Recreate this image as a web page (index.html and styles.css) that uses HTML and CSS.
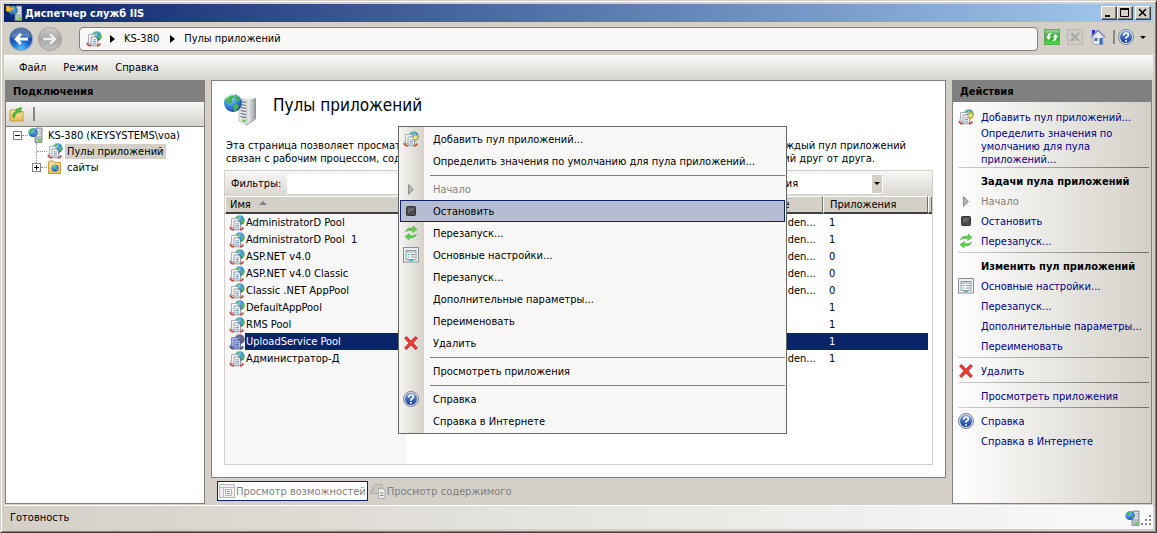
FILE: index.html
```html
<!DOCTYPE html>
<html lang="ru">
<head>
<meta charset="utf-8">
<title>Диспетчер служб IIS</title>
<link rel="stylesheet" href="styles.css">
</head>
<body>
<svg class="defs" aria-hidden="true">
  <defs>
    <radialGradient id="globe-fill" cx=".35" cy=".25" r=".85"><stop offset="0" stop-color="#b5e8ff"/><stop offset=".45" stop-color="#3f8fe6"/><stop offset="1" stop-color="#153a9c"/></radialGradient>
    <linearGradient id="tower-fill"><stop offset="0" stop-color="#f2f4f5"/><stop offset=".5" stop-color="#c4c8cb"/><stop offset="1" stop-color="#8d9296"/></linearGradient>
    <radialGradient id="back-fill" cx=".5" cy=".95" r=".9"><stop offset="0" stop-color="#5cc4ff"/><stop offset=".45" stop-color="#1d66cf"/><stop offset="1" stop-color="#12357f"/></radialGradient>
    <linearGradient id="fwd-fill" x2="0" y2="1"><stop offset="0" stop-color="#cfcdc9"/><stop offset=".5" stop-color="#a9a8a6"/><stop offset="1" stop-color="#c4c2bf"/></linearGradient>
    <linearGradient id="green-fill" x2="0" y2="1"><stop offset="0" stop-color="#a5d9a0"/><stop offset=".5" stop-color="#2da32a"/><stop offset="1" stop-color="#4be83a"/></linearGradient>
    <linearGradient id="help-fill" x2="0" y2="1"><stop offset="0" stop-color="#6f98e0"/><stop offset="1" stop-color="#153a9c"/></linearGradient>
    <linearGradient id="folder-fill" x2="0" y2="1"><stop offset="0" stop-color="#f9e6a4"/><stop offset="1" stop-color="#e6bd55"/></linearGradient>
  </defs>
  <symbol id="pool" viewBox="0 0 16 16">
    <circle cx="10.500" cy="5.300" r="5" fill="url(#globe-fill)"/>
    <path d="M7 2.200Q9 .5 11 1L10 3 8 3.500ZM12.500 4l2.500-1 .3 3.500-2 2.500-1.300-2z" fill="#4cc04c"/>
    <path d="M1.500 10.500Q0 13 3 14.500Q8 16.300 13 14.500L14.500 12.500 11 12Z" fill="#e4e7e9" stroke="#a3a9ad" stroke-width=".5"/>
    <path d="M.8 12.300l1.700 2 2.500.8M11 15l2-.7 1.300-1.500" fill="none" stroke="#d2402f" stroke-width="1.600"/>
    <path d="M2.500 3.500h6.500v9H2.500z" fill="#f7f8f9" stroke="#9aa0a5" stroke-width=".8"/>
    <path d="M5 6h4.500L11.500 8v6H5z" fill="#fff" stroke="#7f878e" stroke-width=".8"/>
    <path d="M6.500 8.800h3.500M6.500 10.500h3.500M6.500 12.200h3.500" stroke="#4a84c4" stroke-width=".8"/>
  </symbol>
  <symbol id="pool-add" viewBox="0 0 16 16">
    <use href="#pool" width="16" height="16"/>
    <path d="M12.500 2.500v8M8.500 6.500h8M9.800 3.800l5.400 5.400M15.200 3.800L9.800 9.200" stroke="#f5a623" stroke-width="1.200"/>
    <circle cx="12.500" cy="6.500" r="1.900" fill="#ffe06a"/>
  </symbol>
  <symbol id="server" viewBox="0 0 32 32">
    <path d="M15 6l8-2.500L32 5v20.500L23 32l-8-4z" fill="#dfe2e4"/>
    <path d="M15 6l8-2.500L32 5l-9 2.500z" fill="#f2f3f4"/>
    <path d="M23 7.500L32 5v20.500L23 32z" fill="url(#tower-fill)"/>
    <path d="M15 6l8 1.500V32l-8-4z" fill="#e6e9eb" stroke="#8c9297" stroke-width=".5"/>
    <path d="M16.500 8.500l5.500 1M16.500 11.500l5.500 1M16.500 14.500l5.500 1M16.500 17.500l5.500 1M16.500 20.500l5.500 1M16.500 23.500l5.500 1.200" stroke="#5b636a" stroke-width="1.200"/>
    <path d="M18.500 27l3 1.300" stroke="#4cc62f" stroke-width="2"/>
    <path d="M32 5v20.500L23 32" fill="none" stroke="#7c8287" stroke-width=".6"/>
    <circle cx="9" cy="10" r="9" fill="url(#globe-fill)"/>
    <path d="M1.500 6Q4 1.500 9 1.500L10.500 4 8 6 8.500 9 5 11 3 9.500ZM12 2.500l4 3.500-1 2.500-3-1ZM9 12l4-1 2 2-3 4.500-2 .5z" fill="#45b548"/>
    <path d="M2.500 5.500Q6 .5 11 2" stroke="#d7f4ff" stroke-width="1.200" fill="none"/>
  </symbol>
  <symbol id="server-small" viewBox="0 0 16 16">
    <path d="M8 1h6v14.500H7V8z" fill="#b4bcc2" stroke="#7a848c" stroke-width=".8"/>
    <path d="M9 3h4M9 5.500h4M9 8h4" stroke="#fff"/>
    <path d="M10 13.500h3.500" stroke="#5fd030" stroke-width="1.600"/>
    <circle cx="5" cy="5.500" r="4.600" fill="url(#globe-fill)"/>
    <path d="M1.500 3Q4 .5 6 1.500L5 4 3 5.500 2.500 8ZM7 6l2-1-1 3-2 1z" fill="#49bb4d"/>
  </symbol>
  <symbol id="app" viewBox="0 0 16 16">
    <use href="#server-small" x="2" y="0" width="16" height="16"/>
    <path d="M0 6V1h4v2l3-1 1 3-3-.5L4 7z" fill="#f5b92d" stroke="#b87812" stroke-width=".6"/>
  </symbol>
  <symbol id="sites" viewBox="0 0 16 16">
    <path d="M1.500 3.500q0-1.500 1.500-1.500h3l1.500 1.500h6v11h-12z" fill="url(#folder-fill)" stroke="#c99b3b"/>
    <circle cx="8" cy="9" r="3.600" fill="url(#globe-fill)"/>
    <path d="M5.500 7.500L8 6l.5 2L7 10zM9 10l2-1-1 3z" fill="#51c24c"/>
  </symbol>
  <symbol id="open" viewBox="0 0 16 16">
    <path d="M1 4h4l1.500 1.500H14V15H1z" fill="url(#folder-fill)" stroke="#c39a40"/>
    <path d="M3.500 11Q3.500 6.500 7.500 5.200L6.500 3.500 12.500 1.500l-1.500 5.500-1.300-1.200Q6.500 7 5 11.500z" fill="#52c43c" stroke="#2c8d27" stroke-width=".7"/>
  </symbol>
  <symbol id="play" viewBox="0 0 16 16"><path d="M5.500 3.500v10l5-5z" fill="#b4b4b4" stroke="#929292"/></symbol>
  <symbol id="stop" viewBox="0 0 16 16"><rect x="3.500" y="3.500" width="9" height="9" rx="1" fill="#4a4a4a" stroke="#333"/><path d="M5 5h6v2L5 10z" fill="#666"/></symbol>
  <symbol id="recycle" viewBox="0 0 16 16">
    <g fill="#64d04c" stroke="#2f9c35" stroke-width=".5"><path d="M2.500 6.800Q4 2.200 10 3.200L10.300 1 14 4.500 9.500 7.500l.2-2Q5 4.600 2.500 6.800Z"/><path d="M13.500 9.200Q12 13.800 6 12.800L5.700 15 2 11.500 6.500 8.500l-.2 2Q11 11.400 13.500 9.200Z"/></g>
  </symbol>
  <symbol id="settings" viewBox="0 0 16 16">
    <rect x=".5" y=".5" width="15" height="14.500" fill="#eceeef" stroke="#8b9196"/>
    <path d="M3 3.500h10v9H3z" fill="#fff" stroke="#959ca2"/><path d="M3 5h10" stroke="#8996a3"/>
    <path d="M4.500 7.500h2M4.500 10h2" stroke="#2db2d6"/><path d="M8 7.500h4M8 10h4" stroke="#8a9299"/><path d="M6 13.500h4" stroke="#28bfe0" stroke-width="1.500"/>
  </symbol>
  <symbol id="delete" viewBox="0 0 16 16"><path d="M1.500 3L3.500 1.500 8 6l4.500-4.500L14.500 3 10 8l4.500 5-2 1.500L8 10l-4.500 4.500L1.500 13 6 8z" fill="#ee3b36" stroke="#b81f20" stroke-width=".7"/></symbol>
  <symbol id="help" viewBox="0 0 16 16">
    <circle cx="8" cy="8" r="7.500" fill="#d6dbe4" stroke="#7d8594"/><circle cx="8" cy="8" r="6" fill="url(#help-fill)"/>
    <path d="M5.700 6.500Q5.700 4 8.100 4T10.400 6Q10.400 7 9 7.800T8 9.800M8 11v1.700" fill="none" stroke="#fff" stroke-width="1.700"/>
  </symbol>
  <symbol id="home" viewBox="0 0 16 16">
    <path d="M2 1h3v5H2z" fill="#2330c5"/><path d="M3 7l5-5 5 5v8.500H3z" fill="#e8ebf3" stroke="#9aa2b8" stroke-width=".8"/>
    <path d="M.8 8.300L8 1.300l7.200 7" fill="none" stroke="#7d88c0" stroke-width="1.500"/>
    <path d="M4.500 9h3v3h-3z" fill="#5a6f98"/><path d="M9.500 9h3v6.500h-3z" fill="#2b6fc0"/>
  </symbol>
  <symbol id="features" viewBox="0 0 16 16"><path d="M.5 1.500h15v13H.5zM.5 4.500h15M4.500 4.500v10" fill="#f1f1f1" stroke="#bababa"/><path d="M6.500 6.500h6v6h-6z" fill="#fff" stroke="#b4b4b4"/><path d="M8 8.500h3M8 10.500h3" stroke="#999"/></symbol>
  <symbol id="content" viewBox="0 0 16 16"><path d="M3 3.500l2-2h7v9H1zM1 12V7l4-1" fill="#cbc8c3" stroke="#b2afab"/><path d="M8.500 5.500h4l2.500 2v8H8.500z" fill="#eee" stroke="#aaa"/><path d="M10 10h3.500M10 12.500h3.500" stroke="#888"/></symbol>
</svg>

<div class="window">
  <header class="titlebar">
    <svg class="icon"><use href="#app"/></svg>
    <h1>Диспетчер служб IIS</h1>
    <div class="winbtns">
      <button class="winbtn" aria-label="Свернуть"><svg viewBox="0 0 12 10"><path d="M2 8h5" stroke="#000" stroke-width="2"/></svg></button>
      <button class="winbtn" aria-label="Развернуть"><svg viewBox="0 0 12 10"><path d="M1.500 1v7.500h8V1M1 1h9" fill="none" stroke="#000"/><path d="M1 1h9" stroke="#000" stroke-width="2"/></svg></button>
      <button class="winbtn close" aria-label="Закрыть"><svg viewBox="0 0 12 10"><path d="M2 1l7 7M9 1L2 8" stroke="#000" stroke-width="1.600"/></svg></button>
    </div>
  </header>

  <div class="navrow">
    <button class="round" aria-label="Назад"><svg viewBox="0 0 26 26"><circle cx="13" cy="13" r="12" fill="#8fa3bd"/><circle cx="13" cy="13" r="11" fill="url(#back-fill)"/><path d="M3 12a10 10 0 0 1 20 0Q13 8 3 12Z" fill="#fff" opacity=".3"/><path d="M6 13l6-6 2 2-2.500 2.500H20v3h-8.500L14 17l-2 2z" fill="#fff"/></svg></button>
    <button class="round" aria-label="Вперёд"><svg viewBox="0 0 26 26"><circle cx="13" cy="13" r="11.500" fill="url(#fwd-fill)" stroke="#a09f9c"/><path d="M20 13l-6-6-2 2 2.500 2.500H6v3h8.500L12 17l2 2z" fill="#eee" stroke="#aaa" stroke-width=".5"/></svg></button>
    <nav class="crumbs" aria-label="Адрес">
      <svg class="icon"><use href="#pool"/></svg>
      <svg class="chevron" viewBox="0 0 5 8"><path d="M0 0v8l5-4z"/></svg>
      <a href="#server">KS-380</a>
      <svg class="chevron" viewBox="0 0 5 8"><path d="M0 0v8l5-4z"/></svg>
      <a href="#pools">Пулы приложений</a>
    </nav>
    <div class="navtools">
      <button aria-label="Обновить"><svg class="icon" viewBox="0 0 16 16"><rect x=".5" y=".5" width="15" height="15" fill="url(#green-fill)" stroke="#5ea75d"/><path d="M1.500 7.500L4.500 11l3-3.500H5.500Q5.500 5.300 8 4.500 3.500 3 3.500 7.500ZM14.500 8.500L11.500 5l-3 3.500h2Q10.500 10.700 8 11.500q4.500 1.500 4.500-3z" fill="#fff"/></svg></button>
      <button aria-label="Остановить загрузку"><svg class="icon" viewBox="0 0 16 16"><rect x=".5" y=".5" width="15" height="15" fill="#cecbc6" stroke="#bdbab5"/><path d="M4 4l8 8M12 4l-8 8" stroke="#aaa8a4" stroke-width="2"/></svg></button>
      <button aria-label="Домой"><svg class="icon"><use href="#home"/></svg></button>
      <span class="divider"></span>
      <button class="helpbtn" aria-label="Справка"><svg class="icon"><use href="#help"/></svg><svg class="caret" viewBox="0 0 6 3"><path d="M0 0h6L3 3z"/></svg></button>
    </div>
  </div>

  <nav class="menubar"><button>Файл</button><button>Режим</button><button>Справка</button></nav>

  <main class="body">
    <section class="pane">
      <h2>Подключения</h2>
      <div class="treetools"><button aria-label="Подключиться"><svg class="icon"><use href="#open"/></svg></button><span class="divider"></span></div>
      <ul class="tree">
        <li><span class="node"><button class="toggle" aria-label="Свернуть узел"><svg viewBox="0 0 7 7"><path d="M1 3.500h5" stroke="#000"/></svg></button><i class="dots"></i><svg class="icon"><use href="#server-small"/></svg><span class="label">KS-380 (KEYSYSTEMS\voa)</span></span>
          <ul>
            <li class="node"><i class="dots long"></i><svg class="icon"><use href="#pool"/></svg><span class="label current">Пулы приложений</span></li>
            <li class="node"><button class="toggle" aria-label="Развернуть узел"><svg viewBox="0 0 7 7"><path d="M1 3.500h5M3.500 1v5" stroke="#000"/></svg></button><i class="dots"></i><svg class="icon"><use href="#sites"/></svg><span class="label">сайты</span></li>
          </ul>
        </li>
      </ul>
    </section>

    <section class="center">
      <div class="feature">
        <div class="heading"><svg class="bigicon"><use href="#server"/></svg><h2>Пулы приложений</h2></div>
        <p class="about">
          <span class="line first"><span>Эта страница позволяет просматривать</span><span>Каждый пул приложений</span></span>
          <span class="line second"><span>связан с рабочим процессом, содержит</span><span>приложений друг от друга.</span></span>
        </p>
        <div class="list">
          <div class="filter">
            <label for="filter">Фильтры:</label><input id="filter" type="text">
            <span class="selectwrap"><select aria-label="Группировка"><option>Без группирования</option></select><span class="drop"><svg class="caret" viewBox="0 0 6 3"><path d="M0 0h6L3 3z"/></svg></span></span>
          </div>
          <table>
            <colgroup><col class="c-name"><col><col class="c-id"><col class="c-apps"><col class="c-end"></colgroup>
            <thead><tr><th>Имя <svg class="sort" viewBox="0 0 8 4"><path d="M4 0l4 4H0z"/></svg></th><th></th><th>Удостоверение</th><th>Приложения</th><th></th></tr></thead>
            <tbody>
              <tr><td><svg class="icon"><use href="#pool"/></svg><span>AdministratorD Pool</span></td><td></td><td>ApplicationPoolIden...</td><td>1</td><td></td></tr>
              <tr><td><svg class="icon"><use href="#pool"/></svg><span>AdministratorD Pool&nbsp; 1</span></td><td></td><td>ApplicationPoolIden...</td><td>1</td><td></td></tr>
              <tr><td><svg class="icon"><use href="#pool"/></svg><span>ASP.NET v4.0</span></td><td></td><td>ApplicationPoolIden...</td><td>0</td><td></td></tr>
              <tr><td><svg class="icon"><use href="#pool"/></svg><span>ASP.NET v4.0 Classic</span></td><td></td><td>ApplicationPoolIden...</td><td>0</td><td></td></tr>
              <tr><td><svg class="icon"><use href="#pool"/></svg><span>Classic .NET AppPool</span></td><td></td><td>ApplicationPoolIden...</td><td>0</td><td></td></tr>
              <tr><td><svg class="icon"><use href="#pool"/></svg><span>DefaultAppPool</span></td><td></td><td></td><td>1</td><td></td></tr>
              <tr><td><svg class="icon"><use href="#pool"/></svg><span>RMS Pool</span></td><td></td><td></td><td>1</td><td></td></tr>
              <tr class="selected"><td><svg class="icon"><use href="#pool"/></svg><span>UploadService Pool</span></td><td></td><td></td><td>1</td><td></td></tr>
              <tr><td><svg class="icon"><use href="#pool"/></svg><span>Администратор-Д</span></td><td></td><td>ApplicationPoolIden...</td><td>1</td><td></td></tr>
            </tbody>
          </table>
          <div class="rest"></div>
        </div>
      </div>
      <div class="tabs">
        <button class="tab active"><svg class="icon"><use href="#features"/></svg>Просмотр возможностей</button>
        <button class="tab"><svg class="icon"><use href="#content"/></svg>Просмотр содержимого</button>
      </div>
    </section>

    <aside class="pane actions">
      <h2>Действия</h2>
      <div class="actionlist">
        <a href="#add"><svg class="icon"><use href="#pool-add"/></svg>Добавить пул приложений...</a>
        <a href="#defaults" class="multi">Определить значения по умолчанию для пула приложений...</a>
        <hr>
        <h3>Задачи пула приложений</h3>
        <a class="off"><svg class="icon"><use href="#play"/></svg>Начало</a>
        <a href="#stop-pool"><svg class="icon"><use href="#stop"/></svg>Остановить</a>
        <a href="#recycle-pool"><svg class="icon"><use href="#recycle"/></svg>Перезапуск...</a>
        <hr>
        <h3>Изменить пул приложений</h3>
        <a href="#basic"><svg class="icon"><use href="#settings"/></svg>Основные настройки...</a>
        <a href="#recycling">Перезапуск...</a>
        <a href="#advanced">Дополнительные параметры...</a>
        <a href="#rename">Переименовать</a>
        <hr>
        <a href="#remove"><svg class="icon"><use href="#delete"/></svg>Удалить</a>
        <hr>
        <a href="#apps">Просмотреть приложения</a>
        <hr>
        <a href="#help-page"><svg class="icon"><use href="#help"/></svg>Справка</a>
        <a href="#online">Справка в Интернете</a>
      </div>
    </aside>
  </main>

  <footer class="status"><span>Готовность</span><svg class="icon"><use href="#server-small"/></svg><svg class="grip" viewBox="0 0 11 11"><path d="M8 0h2v2H8zM4 4h2v2H4zM8 4h2v2H8zM0 8h2v2H0zM4 8h2v2H4zM8 8h2v2H8z" fill="#8b8984"/></svg></footer>

  <div class="context" role="menu">
    <button role="menuitem"><svg class="icon"><use href="#pool-add"/></svg>Добавить пул приложений...</button>
    <button role="menuitem">Определить значения по умолчанию для пула приложений...</button>
    <hr>
    <button role="menuitem" disabled><svg class="icon"><use href="#play"/></svg>Начало</button>
    <button role="menuitem" class="hot"><svg class="icon"><use href="#stop"/></svg>Остановить</button>
    <button role="menuitem"><svg class="icon"><use href="#recycle"/></svg>Перезапуск...</button>
    <button role="menuitem"><svg class="icon"><use href="#settings"/></svg>Основные настройки...</button>
    <button role="menuitem">Перезапуск...</button>
    <button role="menuitem">Дополнительные параметры...</button>
    <button role="menuitem">Переименовать</button>
    <button role="menuitem"><svg class="icon"><use href="#delete"/></svg>Удалить</button>
    <hr>
    <button role="menuitem">Просмотреть приложения</button>
    <hr>
    <button role="menuitem"><svg class="icon"><use href="#help"/></svg>Справка</button>
    <button role="menuitem">Справка в Интернете</button>
  </div>
</div>
</body>
</html>
```

FILE: styles.css
```css
* { box-sizing: border-box; }
body, h1, h2, h3, p, ul { margin: 0; padding: 0; font-weight: normal; }
body, button, input, select {
  font-family: Tahoma, "DejaVu Sans Condensed", "DejaVu Sans", sans-serif;
  font-size: 11px;
  line-height: 13px;
  color: #000;
}
button { border: 0; padding: 0; background: none; }
ul { list-style: none; }
a { color: inherit; text-decoration: none; }
svg { display: block; flex: none; }
hr { border: 0; margin: 0; }
.defs { position: absolute; width: 0; height: 0; }
.icon { width: 16px; height: 16px; flex: none; }
.caret { width: 6px; height: 3px; }
.divider { width: 2px; height: 14px; background: #898782; }

.window {
  position: relative;
  display: flex;
  flex-direction: column;
  min-height: 100vh;
  padding: 3px;
  background: #d4d0c8;
  border: 1px solid;
  border-color: #d4d0c8 #404040 #404040 #d4d0c8;
  box-shadow: inset 1px 1px #fff, inset -1px -1px #808080;
}

.titlebar {
  display: flex;
  align-items: center;
  height: 18px;
  padding: 0 2px;
  background: linear-gradient(90deg, #0a246a, #a6caf0);
}
.titlebar h1 { flex: 1; margin-left: 3px; font-size: 11px; font-weight: bold; color: #fff; }
.winbtns { display: flex; }
.winbtn {
  display: flex;
  width: 16px;
  height: 14px;
  padding: 1px;
  background: #d4d0c8;
  border: 1px solid;
  border-color: #fff #404040 #404040 #fff;
  box-shadow: inset -1px -1px #808080;
}
.winbtn svg { width: 12px; height: 10px; }
.close { margin-left: 2px; }

.navrow { display: flex; align-items: center; height: 33px; padding: 0 7px 0 4px; }
.round { margin-right: 3px; }
.round svg { width: 26px; height: 26px; }
.crumbs {
  display: flex;
  flex: 1;
  align-items: center;
  height: 24px;
  margin: 0 6px 0 13px;
  padding: 0 6px;
  background: #f9f8f7;
  border: 1px solid #808080;
  border-radius: 4px;
}
.chevron { width: 5px; height: 8px; margin: 0 9px 0 8px; }
.crumbs a + .chevron { margin-left: 11px; }
.navtools { display: flex; align-items: center; gap: 7px; margin-bottom: 3px; }
.navtools .divider { margin-right: -4px; }
.helpbtn { display: flex; align-items: center; gap: 6px; }

.menubar {
  display: flex;
  gap: 17px;
  height: 25px;
  padding: 0 15px;
  background: linear-gradient(#fafaf9, #d8d5ce);
}

.body { display: flex; flex: 1; gap: 6px; padding: 0 1px; margin-bottom: 1px; }
.pane {
  display: flex;
  flex: 0 0 200px;
  flex-direction: column;
  background: #fff;
  border: 1px solid #808080;
  border-top: 0;
}
.pane > h2 {
  height: 22px;
  padding-left: 7px;
  background: #808080;
  font-size: 11px;
  font-weight: bold;
  line-height: 24px;
}
.treetools {
  display: flex;
  align-items: center;
  gap: 8px;
  height: 25px;
  padding-left: 3px;
  background: linear-gradient(#f7f6f5, #d6d3cc);
  border-bottom: 1px solid #808080;
}
.tree { padding-left: 7px; }
.tree ul { margin-left: 23px; border-left: 1px dotted #909090; height: 24px; }
.tree ul .toggle { margin-left: -5px; }
.node { display: flex; align-items: center; height: 16px; }
.toggle {
  width: 9px;
  height: 9px;
  background: #fff;
  border: 1px solid #808080;
}
.toggle svg { width: 7px; height: 7px; }
.dots { width: 6px; height: 1px; border-top: 1px dotted #909090; }
.dots.long { width: 10px; }
.tree .icon { margin-right: 2px; }
.label { padding: 0 2px; line-height: 15px; }
.current { background: #d4d0c8; }

.center { display: flex; flex: 1; flex-direction: column; min-width: 0; }
.feature {
  display: flex;
  flex: 1;
  flex-direction: column;
  padding: 11px 12px 12px;
  background: #fff;
  border: 1px solid #808080;
}
.heading { display: flex; align-items: center; gap: 17px; height: 34px; }
.heading h2 { margin-bottom: 8px; font-size: 17px; line-height: 24px; }
.bigicon { width: 32px; height: 32px; }
.about { padding: 13px 0 5px 2px; }
.line { display: flex; justify-content: space-between; white-space: nowrap; }
.first { padding-right: 27px; }
.second { padding-right: 58px; }

.list { display: flex; flex: 1; flex-direction: column; border: 1px solid #d4d0c8; }
.filter {
  display: flex;
  align-items: center;
  height: 25px;
  padding: 2px 49px 2px 0;
  background: linear-gradient(#f7f6f5, #dad7d1);
}
.filter label { padding: 0 6px; }
.filter input { width: 250px; height: 20px; border: 0; background: #fff; }
.selectwrap { position: relative; width: 188px; height: 20px; margin-left: auto; }
.selectwrap select { width: 100%; height: 20px; padding: 0 2px; border: 0; border-radius: 0; background: #fff; appearance: none; }
.drop {
  position: absolute;
  top: 1px;
  right: 1px;
  display: flex;
  align-items: center;
  justify-content: center;
  width: 10px;
  height: 18px;
  background: #d4d0c8;
  pointer-events: none;
}
table { width: 100%; border-collapse: separate; border-spacing: 0; table-layout: fixed; }
.c-name { width: 181px; }
.c-id { width: 120px; }
.c-apps { width: 105px; }
.c-end { width: 4px; }
th, td { padding: 0 0 0 6px; text-align: left; font-weight: normal; white-space: nowrap; }
th {
  height: 18px;
  background: #d4d0c8;
  border: solid;
  border-color: #fff #707070 #404040 #fff;
  border-width: 1px 1px 2px;
}
th:first-child { padding-left: 4px; }
.sort { display: inline-block; width: 8px; height: 4px; margin: 0 0 3px 5px; fill: #808080; }
th:last-child, td:last-child { padding: 0; }
td { height: 17px; overflow: hidden; }
td:first-child { display: flex; align-items: center; padding-left: 4px; background: #f7f7f7; }
td:first-child span { flex: 1; padding-left: 1px; line-height: 17px; }
.selected td { background: #0a246a; color: #fff; }
.selected td:first-child { background: #f7f7f7; }
.selected td span { background: #0a246a; }
.selected td:last-child { background: #fff; }
.selected .icon { filter: brightness(.6) sepia(1) hue-rotate(190deg) saturate(1.5); }
.rest { flex: 1; background: linear-gradient(90deg, #f7f7f7 181px, #fff 181px); }

.tabs { display: flex; gap: 2px; height: 26px; padding: 3px 6px; }
.tab { display: flex; align-items: center; gap: 1px; height: 20px; color: #808080; }
.active { padding: 0 1px; background: #fff; border: 1px solid #0a246a; }

.actions { background: linear-gradient(90deg, #fff, #d4d0c8); }
.actionlist { display: flex; flex-direction: column; padding: 5px 2px 0 5px; }
.actionlist a, .actionlist h3 {
  display: flex;
  align-items: center;
  min-height: 20px;
  padding-left: 23px;
  color: #00008b;
  white-space: nowrap;
}
.actionlist h3 { font-size: 11px; font-weight: bold; color: #000; }
.actionlist .icon { margin: 0 7px 0 -23px; }
.actionlist .multi { padding-right: 25px; white-space: normal; }
.actionlist .off { color: #808080; }
.actionlist hr { height: 1px; margin: 1px 0 3px; background: linear-gradient(90deg, #d0cec9, #706e6a); }

.status {
  display: flex;
  align-items: center;
  height: 24px;
  padding-left: 6px;
  background: linear-gradient(90deg, #d4d0c8, #fafafa);
  border-top: 1px solid #fff;
}
.status span { flex: 1; }
.grip { width: 11px; height: 11px; margin: 6px 1px 0 0; }

.context {
  position: absolute;
  left: 397px;
  top: 125px;
  width: 389px;
  padding: 1px;
  border: 1px solid #666;
  background: linear-gradient(90deg, #f6f5f3, #d6d2ca 25px, #f9f8f7 25px);
}
.context button {
  display: flex;
  align-items: center;
  width: 100%;
  height: 22px;
  padding-left: 32px;
  border: 1px solid transparent;
}
.context .icon { margin: 0 14px 0 -30px; }
.context button:disabled { color: #808080; }
.context .hot { background: #b6bdd2; border-color: #0a246a; }
.context hr { height: 1px; margin: 3px 0 2px 30px; background: #808080; }
```
